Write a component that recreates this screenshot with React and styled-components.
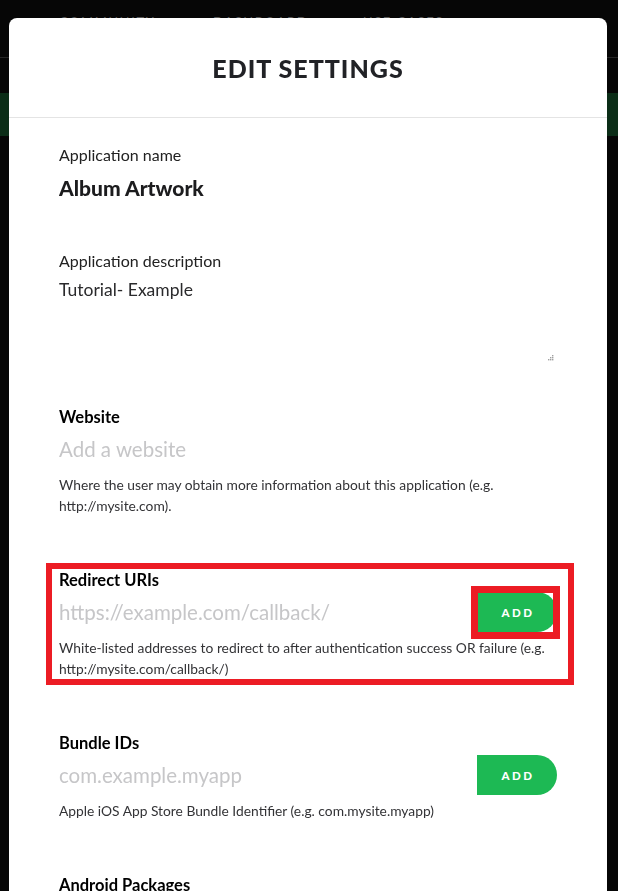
import styled, { createGlobalStyle } from "styled-components";

const GlobalStyle = createGlobalStyle`
  html, body {
    margin: 0;
    padding: 0;
    overflow: hidden;
    background: #060606;
  }
  body {
    font-family: "Lato", "Liberation Sans", sans-serif;
  }
  * {
    box-sizing: border-box;
  }
`;

const Page = styled.div`
  min-height: 100vh;
  background: #060606;
`;

const TopNav = styled.nav`
  display: flex;
  height: 58px;
  padding: 14px 0 0 59px;
  border-bottom: 1px solid #262626;
`;

const NavItem = styled.span`
  width: ${(p) => p.$w}px;
  font-size: 13px;
  letter-spacing: 1.6px;
  color: #5c5c5c;
`;

const Banner = styled.div`
  margin-top: 35px;
  height: 43px;
  background: #0b2d17;
`;

const Overlay = styled.div`
  position: fixed;
  inset: 0;
  padding: 18px 11px 0 9px;
`;

const Modal = styled.div`
  width: 598px;
  height: 100%;
  overflow: hidden;
  background: #fff;
  border-radius: 8px 8px 0 0;
`;

const Header = styled.header`
  height: 100px;
  display: flex;
  align-items: center;
  justify-content: center;
  border-bottom: 1px solid #e4e4e4;
`;

const Title = styled.h1`
  margin: 0;
  font-size: 25px;
  font-weight: 900;
  letter-spacing: 1px;
  color: #212226;
`;

const Body = styled.div`
  padding: 27px 50px 0;
`;

const Field = styled.div`
  position: relative;
  display: flex;
  flex-direction: column;
  margin-bottom: 44px;
`;

const Label = styled.div`
  font-size: ${(p) => (p.$strong ? 16.5 : 16)}px;
  line-height: 20px;
  font-weight: ${(p) => (p.$strong ? 700 : 400)};
  color: ${(p) => (p.$strong ? "#000" : "#222")};
`;

const Input = styled.input`
  display: block;
  width: 100%;
  height: 40px;
  margin-top: 2px;
  padding: 0;
  border: none;
  outline: none;
  background: transparent;
  font-family: inherit;
  font-size: ${(p) => (p.$bold ? 21 : 20.5)}px;
  font-weight: ${(p) => (p.$bold ? 900 : 400)};
  color: #1c1c1e;

  &::placeholder {
    color: #c6c6c8;
    font-weight: 400;
  }
`;

const TextareaWrap = styled.div`
  position: relative;
  margin-top: 2px;
`;

const Textarea = styled.textarea`
  display: block;
  width: 100%;
  height: 90px;
  padding: 5px 0 0;
  border: none;
  outline: none;
  resize: none;
  background: transparent;
  font-family: inherit;
  font-size: 17.5px;
  line-height: 24px;
  color: #2a2a2c;
`;

const Grip = styled.svg`
  position: absolute;
  right: 3px;
  bottom: 2px;
`;

const InputRow = styled.div`
  display: flex;
  align-items: center;
  margin-top: 2px;

  ${Input} {
    margin-top: 0;
    flex: 1;
  }
`;

const ButtonSlot = styled.div`
  position: relative;
  flex: none;
`;

const AddButton = styled.button`
  display: block;
  width: 80px;
  height: 40px;
  border: none;
  border-radius: 0 20px 20px 0;
  background: #1db954;
  color: #fff;
  font-family: inherit;
  font-size: 11.5px;
  font-weight: 900;
  letter-spacing: 2.4px;
  padding: 0 0 0 2px;
`;

const Help = styled.p`
  margin: 5px 0 10px;
  font-size: 13.8px;
  line-height: 21px;
  color: #333336;
`;

const Mark = styled.span`
  position: absolute;
  top: ${(p) => p.$t}px;
  left: ${(p) => p.$l}px;
  right: ${(p) => p.$r}px;
  bottom: ${(p) => p.$b}px;
  border: ${(p) => p.$w}px solid #ec1c24;
  pointer-events: none;
`;

function AddField({ label, placeholder, help, marked }) {
  return (
    <Field>
      <Label $strong>{label}</Label>
      <InputRow>
        <Input placeholder={placeholder} />
        <ButtonSlot>
          <AddButton>ADD</AddButton>
          {marked && <Mark $t={-6} $l={-6} $r={-3} $b={-7} $w={7} />}
        </ButtonSlot>
      </InputRow>
      <Help>{help}</Help>
      {marked && <Mark $t={-7} $l={-13} $r={-17} $b={4} $w={6} />}
    </Field>
  );
}

export default function App() {
  return (
    <>
      <GlobalStyle />
      <Page>
        <TopNav>
          <NavItem $w={154}>COMMUNITY</NavItem>
          <NavItem $w={150}>DASHBOARD</NavItem>
          <NavItem $w={120}>USE CASES</NavItem>
        </TopNav>
        <Banner />
      </Page>
      <Overlay>
        <Modal>
          <Header>
            <Title>EDIT SETTINGS</Title>
          </Header>
          <Body>
            <Field>
              <Label>Application name</Label>
              <Input $bold readOnly value="Album Artwork" />
            </Field>
            <Field>
              <Label>Application description</Label>
              <TextareaWrap>
                <Textarea defaultValue="Tutorial- Example" />
                <Grip width="7" height="7" viewBox="0 0 7 7">
                  <g fill="#a0a0a0">
                    <rect x="5" y="1" width="1.4" height="1.4" />
                    <rect x="3" y="3" width="1.4" height="1.4" />
                    <rect x="5" y="3" width="1.4" height="1.4" />
                    <rect x="1" y="5" width="1.4" height="1.4" />
                    <rect x="3" y="5" width="1.4" height="1.4" />
                    <rect x="5" y="5" width="1.4" height="1.4" />
                  </g>
                </Grip>
              </TextareaWrap>
            </Field>
            <Field>
              <Label $strong>Website</Label>
              <Input placeholder="Add a website" />
              <Help>
                Where the user may obtain more information about this
                application (e.g. http://mysite.com).
              </Help>
            </Field>
            <AddField
              marked
              label="Redirect URIs"
              placeholder="https://example.com/callback/"
              help="White-listed addresses to redirect to after authentication success OR failure (e.g. http://mysite.com/callback/)"
            />
            <AddField
              label="Bundle IDs"
              placeholder="com.example.myapp"
              help="Apple iOS App Store Bundle Identifier (e.g. com.mysite.myapp)"
            />
            <Field>
              <Label $strong>Android Packages</Label>
            </Field>
          </Body>
        </Modal>
      </Overlay>
    </>
  );
}
